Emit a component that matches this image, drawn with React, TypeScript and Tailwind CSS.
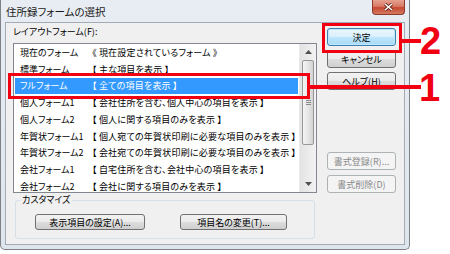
import React from "react";

const rows: [string, string][] = [
  ["現在のフォーム", "《 現在設定されているフォーム 》"],
  ["標準フォーム", "【 主な項目を表示 】"],
  ["フルフォーム", "【 全ての項目を表示 】"],
  ["個人フォーム1", "【 会社住所を含む、個人中心の項目を表示 】"],
  ["個人フォーム2", "【 個人に関する項目のみを表示 】"],
  ["年賀状フォーム1", "【 個人宛ての年賀状印刷に必要な項目のみを表示 】"],
  ["年賀状フォーム2", "【 会社宛ての年賀状印刷に必要な項目のみを表示 】"],
  ["会社フォーム1", "【 自宅住所を含む、会社中心の項目を表示 】"],
  ["会社フォーム2", "【 会社に関する項目のみを表示 】"],
];

function WinButton({
  label,
  variant = "normal",
  className = "",
}: {
  label: string;
  variant?: "normal" | "default" | "disabled";
  className?: string;
}) {
  const styles = {
    normal:
      "border-[#707070] text-black bg-[linear-gradient(to_bottom,#f2f2f2_0%,#ebebeb_50%,#dddddd_51%,#cfcfcf_100%)]",
    default:
      "border-[#3c7fb1] text-black bg-[linear-gradient(to_bottom,#eaf6fd_0%,#d9f0fc_50%,#bee6fd_51%,#a7d9f5_100%)] shadow-[inset_0_0_0_1px_#bfe7fd]",
    disabled: "border-[#adb2b5] text-[#8a8a8a] bg-[#f4f4f4]",
  }[variant];
  return (
    <div
      className={`flex items-center justify-center rounded-[3px] border text-[9px] leading-none whitespace-nowrap ${styles} ${className}`}
    >
      {label}
    </div>
  );
}

function Arrow({ up }: { up?: boolean }) {
  return (
    <div className="h-[16px] flex items-center justify-center shrink-0">
      <svg width="7" height="4" viewBox="0 0 7 4">
        <path d={up ? "M0 4 L3.5 0 L7 4 Z" : "M0 0 L3.5 4 L7 0 Z"} fill="#505050" />
      </svg>
    </div>
  );
}

export default function App() {
  return (
    <div className="relative w-[450px] h-[254px] bg-white overflow-hidden font-['Noto_Sans_CJK_JP',sans-serif] [font-feature-settings:'palt'] text-black">
      <div className="w-[410px] h-[250px] flex flex-col border-x border-b border-[#7c8288] rounded-b-[5px] bg-[linear-gradient(to_bottom,#e8edf3,#dfe5ec)] px-[4px] pb-[4px]">
        {/* title bar */}
        <div className="h-[22px] flex items-start justify-between shrink-0">
          <span className="mt-[5px] pl-[1px] text-[10.5px] leading-[13px] text-[#1a1a1a]">
            住所録フォームの選択
          </span>
          <div className="w-[33px] h-[15px] rounded-b-[4px] border border-t-0 border-[#8b3a2c] bg-[linear-gradient(to_bottom,#e6a191_0%,#d77a65_45%,#c5472f_55%,#d47a63_100%)] flex items-center justify-center">
            <svg width="9" height="8" viewBox="0 0 9 8">
              <path d="M1 1 L8 7 M8 1 L1 7" stroke="#5a1d12" strokeWidth="3" />
              <path d="M1 1 L8 7 M8 1 L1 7" stroke="#ffffff" strokeWidth="1.6" />
            </svg>
          </div>
        </div>

        {/* client area */}
        <div className="flex-1 flex border border-[#a3acb6] bg-[#f0f0f0] pt-[3px] pl-[7px]">
          <div className="w-[304px] flex flex-col">
            <div className="h-[12px] leading-[12px] text-[9px] mb-[5px] whitespace-nowrap">
              レイアウトフォーム(F):
            </div>

            <div className="h-[150px] flex border border-[#828790] bg-white">
              <div className="flex-1 flex flex-col overflow-hidden text-[9px] leading-none">
                {rows.map(([name, desc], i) => {
                  const selected = i === 2;
                  return (
                    <div
                      key={name}
                      className={`h-[16.75px] shrink-0 flex items-center whitespace-nowrap ${
                        selected ? "bg-[#3399ff] text-white mx-[1px] pl-[5px]" : "pl-[6px]"
                      }`}
                    >
                      <span className="w-[72px] shrink-0">{name}</span>
                      <span className="tracking-[0.2px]">{desc}</span>
                    </div>
                  );
                })}
              </div>
              <div className="w-[17px] flex flex-col bg-[linear-gradient(to_right,#e3e3e3,#f2f2f2)] border-l border-[#eaeaea]">
                <Arrow up />
                <div className="h-[85px] mx-[2px] rounded-[2px] border border-[#979797] bg-[linear-gradient(to_right,#f5f5f5,#e2e2e2_60%,#d3d3d3)] flex flex-col items-center justify-center gap-[1px]">
                  <div className="w-[5px] h-px bg-[#8a8a8a]" />
                  <div className="w-[5px] h-px bg-[#8a8a8a]" />
                  <div className="w-[5px] h-px bg-[#8a8a8a]" />
                </div>
                <div className="flex-1" />
                <Arrow />
              </div>
            </div>

            <fieldset className="mt-[1px] mx-[2px] h-[45px] border border-[#d5dfe5] rounded-[3px] px-[19px]">
              <legend className="ml-[-15px] px-[2px] text-[9px] leading-[12px]">
                カスタマイズ
              </legend>
              <div className="mt-[8px] flex gap-[35px]">
                <WinButton label="表示項目の設定(A)..." className="w-[110px] h-[16px]" />
                <WinButton label="項目名の変更(T)..." className="w-[107px] h-[16px]" />
              </div>
            </fieldset>
          </div>

          <div className="ml-[10px] w-[69px] flex flex-col pt-[2px]">
            <WinButton label="決定" variant="default" className="h-[18px]" />
            <WinButton label="キャンセル" className="h-[18px] mt-[4px]" />
            <WinButton label="ヘルプ(H)" className="h-[18px] mt-[4px]" />
            <WinButton label="書式登録(R)..." variant="disabled" className="h-[18px] mt-[62px]" />
            <WinButton label="書式削除(D)" variant="disabled" className="h-[18px] mt-[5px]" />
          </div>
        </div>
      </div>

      {/* annotations */}
      <div className="absolute left-[8px] top-[73px] w-[302px] h-[26px] border-[3px] border-[#f00010]" />
      <div className="absolute left-[310px] top-[85px] w-[111px] h-[4px] bg-[#f00010]" />
      <div className="absolute left-[419px] top-[63px] text-[38px] leading-[50px] font-bold font-['Liberation_Sans',sans-serif] text-[#f00010]">
        1
      </div>
      <div className="absolute left-[322px] top-[23px] w-[80px] h-[30px] border-[3px] border-[#f00010]" />
      <div className="absolute left-[402px] top-[39px] w-[19px] h-[4px] bg-[#f00010]" />
      <div className="absolute left-[420px] top-[16px] text-[38px] leading-[50px] font-bold font-['Liberation_Sans',sans-serif] text-[#f00010]">
        2
      </div>
    </div>
  );
}
